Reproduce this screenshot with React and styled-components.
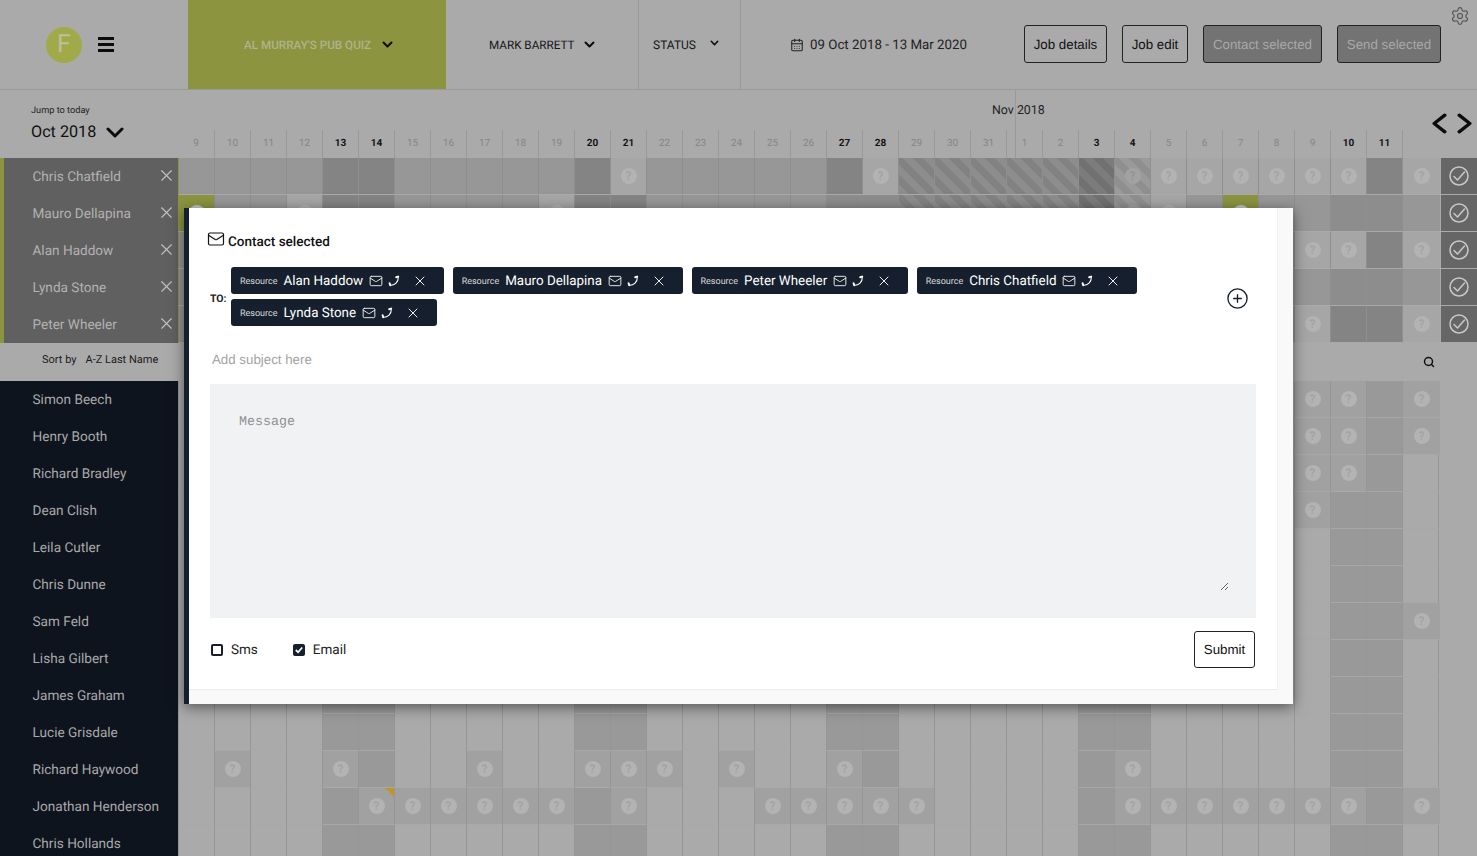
import React from 'react';
import styled, { createGlobalStyle, css } from 'styled-components';
import { Settings, Mail, X, CirclePlus, CalendarDays, Search } from 'lucide-react';

const GlobalStyle = createGlobalStyle`
  * { box-sizing: border-box; }
  html, body { margin: 0; padding: 0; height: 100%; overflow: hidden; background: #aaaaaa; }
  body { font-family: Roboto, "Liberation Sans", sans-serif; color: #111; text-rendering: geometricPrecision; }
  input, textarea, button { text-rendering: geometricPrecision; }
`;

const Page = styled.div`
  position: relative;
  width: 1477px;
  height: 856px;
  overflow: hidden;
  background: #aaaaaa;
`;

/* ---------- Header ---------- */
const Header = styled.header`
  display: flex;
  height: 90px;
  border-bottom: 1px solid #999;
  padding-right: 7px;
`;
const Brand = styled.div`
  width: 188px;
  display: flex;
  align-items: center;
  padding-left: 46px;
  gap: 16px;
`;
const Logo = styled.div`
  width: 36px;
  height: 36px;
  border-radius: 50%;
  background: #a0aa48;
  color: #bcc09c;
  font-size: 25px;
  line-height: 36px;
  text-align: center;
`;
const ProjectSelect = styled.div`
  width: 258px;
  background: #8c9440;
  display: flex;
  align-items: center;
  padding-left: 56px;
  gap: 11px;
  color: #afb38a;
  font-size: 11.7px;
  font-weight: 500;
`;
const HeaderSelect = styled.div`
  display: flex;
  align-items: center;
  width: ${p => p.$width}px;
  padding-left: ${p => p.$pad}px;
  gap: ${p => p.$gap}px;
  font-size: 11.7px;
  color: #161616;
  ${p => p.$divided && css`border-right: 1px solid #999;`}
`;
const StatusText = styled.span`
  margin-top: 1px;
  font-size: 12px;
`;
const StatusChevron = styled.span`
  display: flex;
  margin-top: -4px;
`;
const DateRange = styled.div`
  display: flex;
  align-items: center;
  padding-left: 49px;
  gap: 6px;
  font-size: 13.3px;
  color: #222;
`;
const DateText = styled.span`
  margin-top: 1px;
`;
const Actions = styled.div`
  margin-left: auto;
  display: flex;
  align-items: center;
  gap: 15px;
`;
const ActionButton = styled.button`
  width: ${p => p.$w}px;
  height: 38px;
  padding: 0;
  margin-top: -1px;
  border: 1px solid #222;
  border-radius: 3px;
  background: ${p => (p.$muted ? '#737373' : 'transparent')};
  color: ${p => (p.$muted ? '#a8a8a8' : '#111')};
  font-family: "Liberation Sans", sans-serif;
  font-size: 13.3px;
`;
const GearSlot = styled.div`
  margin: 6px 0 0 9px;
  color: #555;
  display: flex;
  align-self: flex-start;
`;

/* ---------- Sub header ---------- */
const SubHeader = styled.div`
  display: flex;
  height: 68px;
`;
const JumpPanel = styled.div`
  width: 178px;
  padding: 15px 0 0 31px;
`;
const JumpLabel = styled.div`
  font-size: 9.2px;
  line-height: 12px;
  color: #222;
`;
const MonthPicker = styled.div`
  display: flex;
  align-items: center;
  gap: 10px;
  margin-top: 3px;
  font-size: 16.2px;
  line-height: 24px;
  color: #111;
`;
const Timeline = styled.div`
  position: relative;
  flex: 1;
`;
const MonthRow = styled.div`
  height: 40px;
  display: flex;
  justify-content: space-between;
  padding: 0 5px 0 814px;
`;
const MonthName = styled.span`
  font-size: 12.4px;
  line-height: 41px;
  color: #222;
`;
const MonthLine = styled.i`
  position: absolute;
  left: 837px;
  top: 0;
  height: 68px;
  width: 1px;
  background: #999;
`;
const Arrows = styled.div`
  display: flex;
  gap: 10px;
  margin-top: 23px;
  height: 21px;
`;
const DateRow = styled.div`
  display: flex;
  height: 28px;
`;
const DateCell = styled.div`
  width: 36px;
  font-size: 10px;
  line-height: 27px;
  text-align: center;
  font-weight: ${p => (p.$bold ? 700 : 400)};
  color: ${p => (p.$bold ? '#141414' : '#868686')};
  ${p => !p.$first && css`border-left: 1px solid #999;`}
`;

/* ---------- Board ---------- */
const Row = styled.div`
  display: flex;
  height: 37px;
`;
const Name = styled.div`
  width: 178px;
  flex: none;
  display: flex;
  align-items: center;
  font-size: 13.6px;
  padding-left: 32.5px;
  ${p => p.$selected
    ? css`
      background: #606060;
      color: #b2b2b2;
      border-left: 4px solid #8c9440;
      padding-left: 28.5px;
    `
    : css`
      background: #0e141e;
      color: #a9a9a9;
    `}
`;
const RemoveIcon = styled.span`
  display: flex;
  margin-left: auto;
  margin-right: 2.5px;
  margin-bottom: 2px;
  color: #c2c2c2;
`;

const cellColours = {
  base: '#979797',
  dark: '#848484',
  mid: '#8d8d8d',
  open: '#a6a6a6',
  olive: '#8c9440',
  plain: '#aaaaaa',
  shade: '#999999',
  ask: '#a1a1a1',
};
const hatches = {
  hatch: ['#8d8d8d', '#828282'],
  hatchDark: ['#7c7c7c', '#717171'],
  hatchLight: ['#9a9a9a', '#8f8f8f'],
};
const Cell = styled.div`
  position: relative;
  flex: none;
  width: ${p => p.$w}px;
  display: flex;
  align-items: center;
  justify-content: center;
  border-bottom: 1px solid ${p => (p.$top ? '#aaaaaa' : '#a8a8a8')};
  border-left: 1px solid ${p => {
    if (p.$top) return p.$first ? '#8c9440' : '#8f8f8f';
    return '#969696';
  }};
  ${p => p.$rightLine && css`border-right: 1px solid #969696;`}
  ${p => (hatches[p.$kind]
    ? css`background: repeating-linear-gradient(45deg, ${hatches[p.$kind][0]} 0 7px, ${hatches[p.$kind][1]} 7px 14px);`
    : css`background: ${cellColours[p.$kind]};`)}
`;
const askTones = {
  normal: ['#b3b3b3', '#a2a2a2'],
  olive: ['#c4c4c4', '#8c9440'],
  faint: ['#a2a2a2', '#929292'],
};
const Ask = styled.span`
  width: 16px;
  height: 16px;
  border-radius: 50%;
  background: ${p => askTones[p.$tone][0]};
  color: ${p => askTones[p.$tone][1]};
  font-size: 12px;
  font-weight: 500;
  line-height: 16px;
  text-align: center;
`;
const Flag = styled.i`
  position: absolute;
  top: 0;
  right: 0;
  width: 0;
  height: 0;
  border-top: 9px solid #c0962c;
  border-left: 9px solid transparent;
`;
const ConfirmCell = styled.div`
  width: 36px;
  flex: none;
  margin-left: auto;
  display: flex;
  align-items: center;
  justify-content: center;
  background: #666666;
  border-bottom: 1px solid #aaaaaa;
`;
const SortRow = styled.div`
  display: flex;
  align-items: center;
  height: 38px;
  padding: 0 42px 0 42px;
  font-size: 11px;
  color: #1c1c1c;
`;
const SortLabel = styled.span`
  margin-top: -6px;
`;
const SortValue = styled(SortLabel)`
  margin-left: 9px;
`;
const SearchSlot = styled.span`
  display: flex;
  margin-left: auto;
  color: #111;
`;

/* ---------- Modal ---------- */
const Modal = styled.section`
  position: absolute;
  left: 184px;
  top: 208px;
  width: 1109px;
  height: 496px;
  border-left: 5px solid #161f2d;
  padding: 0 15px 14px 0;
  background: #f9f9f9;
  box-shadow: 0 3px 13px rgba(0, 0, 0, 0.5);
`;
const ModalBody = styled.div`
  height: 100%;
  background: #fff;
  border-right: 1px solid #f1f1f1;
  border-bottom: 1px solid #ececec;
  padding: 25px 0 0 19px;
`;
const ModalTitle = styled.h2`
  display: flex;
  align-items: flex-start;
  gap: 3px;
  margin: 0 0 16px;
  height: 18px;
  font-size: 13.5px;
  font-weight: 500;
  line-height: 18px;
  color: #111;
`;
const TitleIcon = styled.span`
  display: flex;
  margin: -3px 0 0 -1px;
`;
const Recipients = styled.div`
  display: flex;
  align-items: center;
  padding: 0 28px 0 2px;
`;
const ToLabel = styled.span`
  width: 21px;
  flex: none;
  margin-top: 3px;
  font-size: 10.5px;
  font-weight: 700;
  color: #222;
`;
const Chips = styled.div`
  display: flex;
  flex-wrap: wrap;
  width: 930px;
  gap: 5px 9px;
`;
const Chip = styled.div`
  display: flex;
  align-items: center;
  height: 27px;
  padding: 0 15.5px 0 9px;
  border-radius: 3px;
  background: #161f2d;
  color: #fff;
`;
const ChipTag = styled.span`
  margin-top: 2px;
  font-size: 9px;
  color: #d8d8d8;
`;
const ChipName = styled.span`
  margin: 1px 0 0 6px;
  font-size: 13.4px;
`;
const ChipIcon = styled.span`
  display: flex;
  margin-left: ${p => p.$gap}px;
`;
const AddSlot = styled.span`
  display: flex;
  margin: 4px 0 0 auto;
  color: #161f2d;
`;
const Form = styled.div`
  padding: 20px 0 0 2px;
`;
const Subject = styled.input`
  display: block;
  width: 1046px;
  height: 26px;
  padding: 0 2px;
  border: 0;
  outline: 0;
  background: transparent;
  font-family: "Liberation Sans", sans-serif;
  font-size: 13.3px;
  &::placeholder { color: #a3a3a3; opacity: 1; }
`;
const MessageBox = styled.div`
  width: 1046px;
  height: 234px;
  margin-top: 12px;
  padding: 17px 27px 27px 19px;
  background: #f1f2f4;
`;
const Message = styled.textarea`
  display: block;
  width: 100%;
  height: 100%;
  padding: 13px 10px 10px;
  border: 0;
  outline: 0;
  background: transparent;
  font-family: "Liberation Mono", monospace;
  font-size: 13.3px;
  &::placeholder { color: #8f8f8f; opacity: 1; }
`;
const Options = styled.div`
  display: flex;
  align-items: center;
  width: 1046px;
  height: 37px;
  margin-top: 13px;
  padding: 0 1px;
`;
const Option = styled.label`
  display: flex;
  align-items: center;
  gap: 8px;
  margin-right: ${p => p.$gap || 0}px;
  font-size: 13.5px;
  color: #222;
`;
const Box = styled.span`
  width: 12px;
  height: 12px;
  display: flex;
  border: 2px solid #161f2d;
  border-radius: 2px;
  background: ${p => (p.$checked ? '#161f2d' : '#fff')};
`;
const Submit = styled.button`
  margin-left: auto;
  height: 37px;
  width: 61px;
  padding: 0;
  border: 1px solid #222;
  border-radius: 3px;
  background: #fff;
  color: #111;
  font-family: "Liberation Sans", sans-serif;
  font-size: 13.3px;
`;

/* ---------- Drawings ---------- */
const Chevron = ({ w, h, sw, dir = 'down' }) => {
  const d = {
    down: `M${sw / 2 + 0.5} ${sw / 2 + 0.5} L${w / 2} ${h - sw / 2 - 0.5} L${w - sw / 2 - 0.5} ${sw / 2 + 0.5}`,
    left: `M${w - sw / 2 - 0.5} ${sw / 2 + 0.5} L${sw / 2 + 0.5} ${h / 2} L${w - sw / 2 - 0.5} ${h - sw / 2 - 0.5}`,
    right: `M${sw / 2 + 0.5} ${sw / 2 + 0.5} L${w - sw / 2 - 0.5} ${h / 2} L${sw / 2 + 0.5} ${h - sw / 2 - 0.5}`,
  }[dir];
  return (
    <svg width={w} height={h} viewBox={`0 0 ${w} ${h}`} fill="none">
      <path d={d} stroke="#0c0c0c" strokeWidth={sw} strokeLinecap="round" strokeLinejoin="round" />
    </svg>
  );
};
const Burger = () => (
  <svg width="16" height="15" viewBox="0 0 16 15">
    <path d="M0 1.5h16M0 7.5h16M0 13.5h16" stroke="#0c0c0c" strokeWidth="3" />
  </svg>
);
const PhoneIcon = () => (
  <svg width="12" height="12" viewBox="0 0 12 12" fill="none" stroke="#fff" strokeLinecap="round">
    <path d="M10.3 2.5C10.4 6.8 6.8 10.4 2.5 10.3" strokeWidth="1.1" />
    <path d="M8.2 2.2L10.2 1.6M1.6 8.2L2.2 10.2" strokeWidth="2" />
  </svg>
);
const Tick = () => (
  <svg width="8" height="8" viewBox="0 0 8 8" fill="none">
    <path d="M.8 4l2.3 2.3L7.2 1.5" stroke="#fff" strokeWidth="1.8" />
  </svg>
);
const ConfirmIcon = () => (
  <svg width="20" height="20" viewBox="0 0 20 20" fill="none" stroke="#c8c8c8" strokeWidth="1.5">
    <circle cx="10" cy="10" r="9" />
    <path d="M5 10.5L8.5 14L15.5 6" strokeLinecap="round" strokeLinejoin="round" />
  </svg>
);

/* ---------- Data ---------- */
const dates = [
  ...Array.from({ length: 23 }, (_, i) => i + 9),
  ...Array.from({ length: 11 }, (_, i) => i + 1),
];
const o = d => d - 9;
const n = d => 22 + d;
const EX = 34;
const weekend = new Set([o(13), o(14), o(20), o(21), o(27), o(28), n(3), n(4), n(10), n(11)]);
const hatchRow = { [o(29)]: 'hatch', [o(30)]: 'hatch', [o(31)]: 'hatch', [n(1)]: 'hatch', [n(2)]: 'hatch', [n(3)]: 'hatchDark', [n(4)]: 'hatchLight' };

const selected = [
  {
    name: 'Chris Chatfield',
    ask: [o(21), o(28), n(4), n(5), n(6), n(7), n(8), n(9), n(10), EX],
    kinds: hatchRow,
  },
  {
    name: 'Mauro Dellapina',
    ask: [o(9), o(12), o(19), n(4), n(5), n(7)],
    kinds: { ...hatchRow, [o(9)]: 'olive', [n(7)]: 'olive', [o(27)]: 'mid', [o(28)]: 'mid', [n(10)]: 'mid', [n(11)]: 'mid', [n(5)]: 'open', [n(6)]: 'base' },
  },
  { name: 'Alan Haddow', ask: [n(9), n(10), EX], kinds: {} },
  { name: 'Lynda Stone', ask: [], kinds: { [n(10)]: 'mid', [n(11)]: 'mid', [n(9)]: 'base' } },
  { name: 'Peter Wheeler', ask: [n(9), EX], kinds: {} },
];

const others = [
  { name: 'Simon Beech', ask: [n(9), n(10), EX] },
  { name: 'Henry Booth', ask: [n(9), n(10), EX] },
  { name: 'Richard Bradley', ask: [n(9), n(10)] },
  { name: 'Dean Clish', ask: [n(9)] },
  { name: 'Leila Cutler', ask: [] },
  { name: 'Chris Dunne', ask: [] },
  { name: 'Sam Feld', ask: [EX] },
  { name: 'Lisha Gilbert', ask: [] },
  { name: 'James Graham', ask: [] },
  { name: 'Lucie Grisdale', ask: [] },
  { name: 'Richard Haywood', ask: [o(10), o(13), o(17), o(20), o(21), o(22), o(24), o(27), n(4)] },
  {
    name: 'Jonathan Henderson',
    ask: [o(14), o(15), o(16), o(17), o(18), o(19), o(21), o(25), o(26), o(27), o(28), o(29), n(4), n(5), n(6), n(7), n(8), n(9), n(10), EX],
    flag: o(14),
  },
  { name: 'Chris Hollands', ask: [] },
];

const chips = ['Alan Haddow', 'Mauro Dellapina', 'Peter Wheeler', 'Chris Chatfield', 'Lynda Stone'];

const extraWidth = (top, asked) => {
  if (top) return 38;
  return asked ? 38 : 37;
};
const toneFor = kind => {
  if (kind === 'olive') return 'olive';
  if (kind === 'hatchLight') return 'faint';
  return 'normal';
};

const GridCells = ({ row, top }) => {
  const all = Array.from({ length: 35 }, (_, i) => i);
  return all.map(i => {
    const asked = row.ask.includes(i);
    const fixed = row.kinds && row.kinds[i];
    let kind;
    if (fixed) kind = fixed;
    else if (asked) kind = top ? 'open' : 'ask';
    else if (weekend.has(i)) kind = top ? 'dark' : 'shade';
    else kind = top ? 'base' : 'plain';
    const isExtra = i === EX;
    return (
      <Cell
        key={i}
        $kind={kind}
        $top={top}
        $first={i === 0}
        $w={isExtra ? extraWidth(top, asked) : 36}
        $rightLine={isExtra && !top && !asked}
      >
        {asked && <Ask $tone={toneFor(kind)}>?</Ask>}
        {row.flag === i && <Flag />}
      </Cell>
    );
  });
};

export default function App() {
  return (
    <Page>
      <GlobalStyle />
      <Header>
        <Brand>
          <Logo>F</Logo>
          <Burger />
        </Brand>
        <ProjectSelect>
          AL MURRAY'S PUB QUIZ
          <Chevron w={11} h={7} sw={2} />
        </ProjectSelect>
        <HeaderSelect $width={193} $pad={43} $gap={10} $divided>
          MARK BARRETT
          <Chevron w={11} h={7} sw={2} />
        </HeaderSelect>
        <HeaderSelect $width={102} $pad={14} $gap={14} $divided>
          <StatusText>STATUS</StatusText>
          <StatusChevron><Chevron w={9} h={6} sw={1.6} /></StatusChevron>
        </HeaderSelect>
        <DateRange>
          <CalendarDays size={14} strokeWidth={1.8} />
          <DateText>09 Oct 2018 - 13 Mar 2020</DateText>
        </DateRange>
        <Actions>
          <ActionButton $w={83}>Job details</ActionButton>
          <ActionButton $w={66}>Job edit</ActionButton>
          <ActionButton $w={119} $muted>Contact selected</ActionButton>
          <ActionButton $w={104} $muted>Send selected</ActionButton>
        </Actions>
        <GearSlot><Settings size={20} strokeWidth={1.4} /></GearSlot>
      </Header>

      <SubHeader>
        <JumpPanel>
          <JumpLabel>Jump to today</JumpLabel>
          <MonthPicker>
            Oct 2018
            <Chevron w={18} h={11} sw={3} />
          </MonthPicker>
        </JumpPanel>
        <Timeline>
          <MonthRow>
            <MonthName>Nov 2018</MonthName>
            <Arrows>
              <Chevron w={15} h={21} sw={3.4} dir="left" />
              <Chevron w={15} h={21} sw={3.4} dir="right" />
            </Arrows>
          </MonthRow>
          <MonthLine />
          <DateRow>
            {dates.map((d, i) => (
              <DateCell key={i} $first={i === 0} $bold={weekend.has(i)}>{d}</DateCell>
            ))}
            <DateCell />
          </DateRow>
        </Timeline>
      </SubHeader>

      {selected.map(row => (
        <Row key={row.name}>
          <Name $selected>
            {row.name}
            <RemoveIcon><X size={19} strokeWidth={1.4} /></RemoveIcon>
          </Name>
          <GridCells row={row} top />
          <ConfirmCell><ConfirmIcon /></ConfirmCell>
        </Row>
      ))}

      <SortRow>
        <SortLabel>Sort by</SortLabel>
        <SortValue>A-Z Last Name</SortValue>
        <SearchSlot><Search size={12} strokeWidth={3} /></SearchSlot>
      </SortRow>

      {others.map(row => (
        <Row key={row.name}>
          <Name>{row.name}</Name>
          <GridCells row={row} />
        </Row>
      ))}

      <Modal>
        <ModalBody>
          <ModalTitle>
            <TitleIcon><Mail size={18} strokeWidth={1.6} /></TitleIcon>
            Contact selected
          </ModalTitle>
          <Recipients>
            <ToLabel>TO:</ToLabel>
            <Chips>
              {chips.map(name => (
                <Chip key={name}>
                  <ChipTag>Resource</ChipTag>
                  <ChipName>{name}</ChipName>
                  <ChipIcon $gap={6}><Mail size={14} strokeWidth={1.5} /></ChipIcon>
                  <ChipIcon $gap={5}><PhoneIcon /></ChipIcon>
                  <ChipIcon $gap={12}><X size={16} strokeWidth={1.4} /></ChipIcon>
                </Chip>
              ))}
            </Chips>
            <AddSlot><CirclePlus size={23} strokeWidth={1.4} /></AddSlot>
          </Recipients>
          <Form>
            <Subject placeholder="Add subject here" />
            <MessageBox>
              <Message placeholder="Message" />
            </MessageBox>
            <Options>
              <Option $gap={35}><Box />Sms</Option>
              <Option><Box $checked><Tick /></Box>Email</Option>
              <Submit>Submit</Submit>
            </Options>
          </Form>
        </ModalBody>
      </Modal>
    </Page>
  );
}
